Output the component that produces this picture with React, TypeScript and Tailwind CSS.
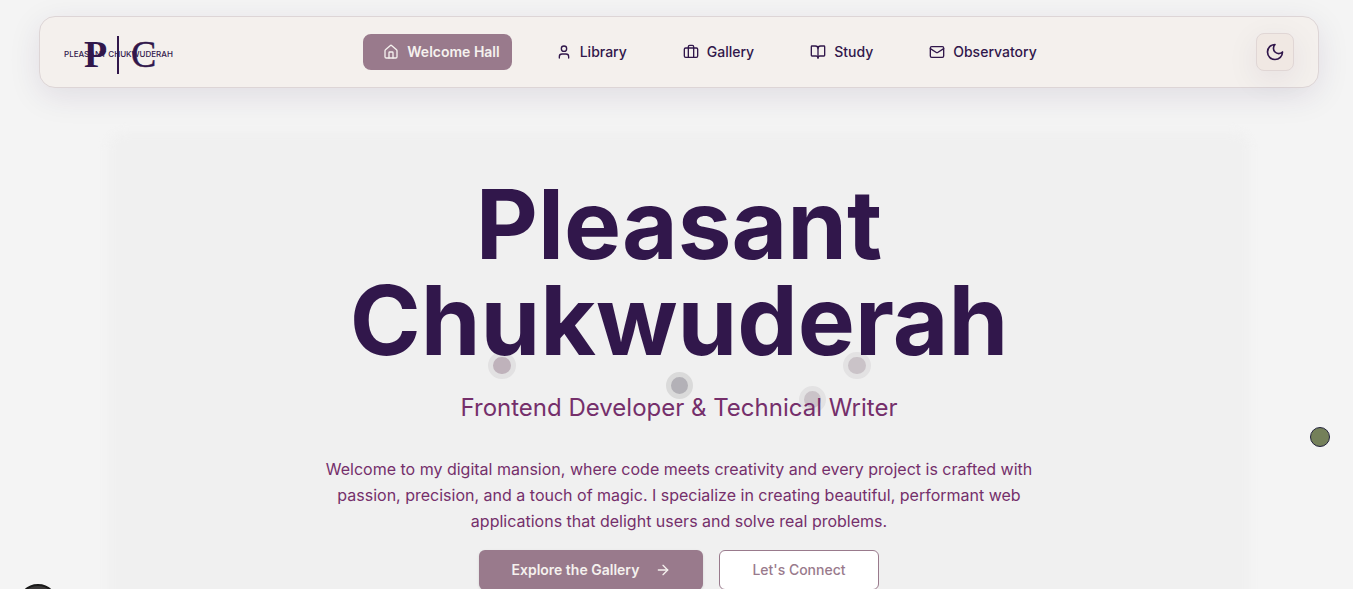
import type { ReactNode } from "react";
import { ArrowRight, BookOpen, Briefcase, House, Mail, User } from "lucide-react";

const links = [
  { label: "Library", icon: User },
  { label: "Gallery", icon: Briefcase },
  { label: "Study", icon: BookOpen },
  { label: "Observatory", icon: Mail },
];

function Logo() {
  return (
    <a href="#home" aria-label="Pleasant Chukwuderah" className="block">
      <svg width="92" height="40" viewBox="0 0 92 40" className="overflow-visible fill-[#31174b]">
        <text x="20" y="35" fontSize="38" fontWeight="700" fontFamily="Liberation Serif, serif">P</text>
        <rect x="53" y="4" width="2" height="38" />
        <text x="67" y="35" fontSize="38" fontFamily="Liberation Serif, serif" stroke="#31174b" strokeWidth="0.4">C</text>
        <text x="0" y="25" fontSize="8" fontWeight="500" fontFamily="Inter, sans-serif">PLEASANT CHUKWUDERAH</text>
      </svg>
    </a>
  );
}

function NavLink({ active = false, children }: { active?: boolean; children: ReactNode }) {
  return (
    <a
      href="#section"
      className={
        active
          ? "flex h-9 items-center gap-2 rounded-lg bg-[#997a8c] pr-3 pl-5 text-sm font-semibold text-[#f5f1ee]"
          : "flex h-9 items-center gap-2 rounded-lg pr-3 pl-5 text-sm font-medium text-[#31174b]"
      }
    >
      {children}
    </a>
  );
}

function Header() {
  return (
    <header className="mx-auto flex h-18 max-w-7xl items-center justify-between rounded-2xl border border-[#ddd5d6] bg-[#f4f0ed] px-6 shadow-[0_8px_32px_rgba(49,23,75,0.1)]">
      <Logo />
      <nav className="flex gap-6">
        <NavLink active>
          <House size={16} />
          Welcome Hall
        </NavLink>
        {links.map(({ label, icon: Icon }) => (
          <NavLink key={label}>
            <Icon size={16} />
            {label}
          </NavLink>
        ))}
      </nav>
      <button
        type="button"
        aria-label="Switch to dark theme"
        className="flex size-[38px] items-center justify-center rounded-lg border border-[#e0d6d5] bg-[#f0e8e3] text-[#31174b] shadow-[0_8px_32px_rgba(49,23,75,0.08)]"
      >
        <svg width="20" height="20" viewBox="0 0 24 24" fill="none" stroke="currentColor" strokeWidth="2" strokeLinecap="round" strokeLinejoin="round">
          <path d="M12 3a6 6 0 0 0 9 9 9 9 0 1 1-9-9Z" />
        </svg>
      </button>
    </header>
  );
}

function Orbs() {
  return (
    <div aria-hidden="true" className="absolute top-0 left-1/2">
      <span className="absolute top-[224px] left-[-191px] h-[27px] w-[28px] rounded-full border-[5px] border-[#e2e1e2] bg-[#bfb2bb]" />
      <span className="absolute top-[244px] left-[-13px] h-[27px] w-[27px] rounded-full border-[5px] border-[#dadada] bg-[#b3b1b7]" />
      <span className="absolute top-[224px] left-[164px] h-[27px] w-[28px] rounded-full border-[5px] border-[#e3e2e3] bg-[#cac3c8]" />
      <span className="absolute top-[258px] left-[120px] h-[27px] w-[27px] rounded-full border-[5px] border-[#e3e2e3] bg-[#cac3c8]" />
    </div>
  );
}

function Hero() {
  return (
    <main className="relative mx-auto mt-10 max-w-[1150px] px-6 pt-12 pb-16 text-center">
      <div aria-hidden="true" className="absolute inset-x-1 top-1 bottom-0 rounded-2xl bg-[#f0f0f0] blur-xs" />
      <div className="absolute inset-x-0 top-0">
        <Orbs />
      </div>
      <div className="relative">
        <h1 className="mx-auto max-w-4xl text-8xl leading-none font-bold text-[#31174b]">
          Pleasant
          <br />
          Chukwuderah
        </h1>
        <p className="mt-6 text-2xl leading-8 text-[#752f6b]">Frontend Developer &amp; Technical Writer</p>
        <p className="mx-auto mt-8 max-w-3xl text-base leading-[26px] text-[#752f6b]">
          Welcome to my digital mansion, where code meets creativity and every project is crafted with passion,
          precision, and a touch of magic. I specialize in creating beautiful, performant web applications that delight
          users and solve real problems.
        </p>
        <div className="mt-4 flex justify-center gap-4">
          <button
            type="button"
            className="flex h-10 items-center gap-4 rounded-md bg-[#997a8c] px-8 text-sm font-semibold text-[#f5f1ee] shadow-sm"
          >
            Explore the Gallery
            <ArrowRight size={16} />
          </button>
          <button
            type="button"
            className="h-10 rounded-md border border-[#997a8c] bg-white px-8 text-sm font-medium text-[#997a8c]"
          >
            Let's Connect
          </button>
        </div>
      </div>
    </main>
  );
}

export default function App() {
  return (
    <div className="h-screen overflow-hidden bg-[#f4f4f4] pt-4 pl-[5px] font-['Inter',sans-serif]">
      <Header />
      <Hero />
      <div aria-hidden="true" className="fixed top-[427px] right-[23px] size-5 rounded-full border border-[#22223b] bg-[#74805a]" />
      <div aria-hidden="true" className="fixed -bottom-[35px] left-[18px] size-10 rounded-full border-2 border-[#181818] bg-[#3a3838]" />
    </div>
  );
}
